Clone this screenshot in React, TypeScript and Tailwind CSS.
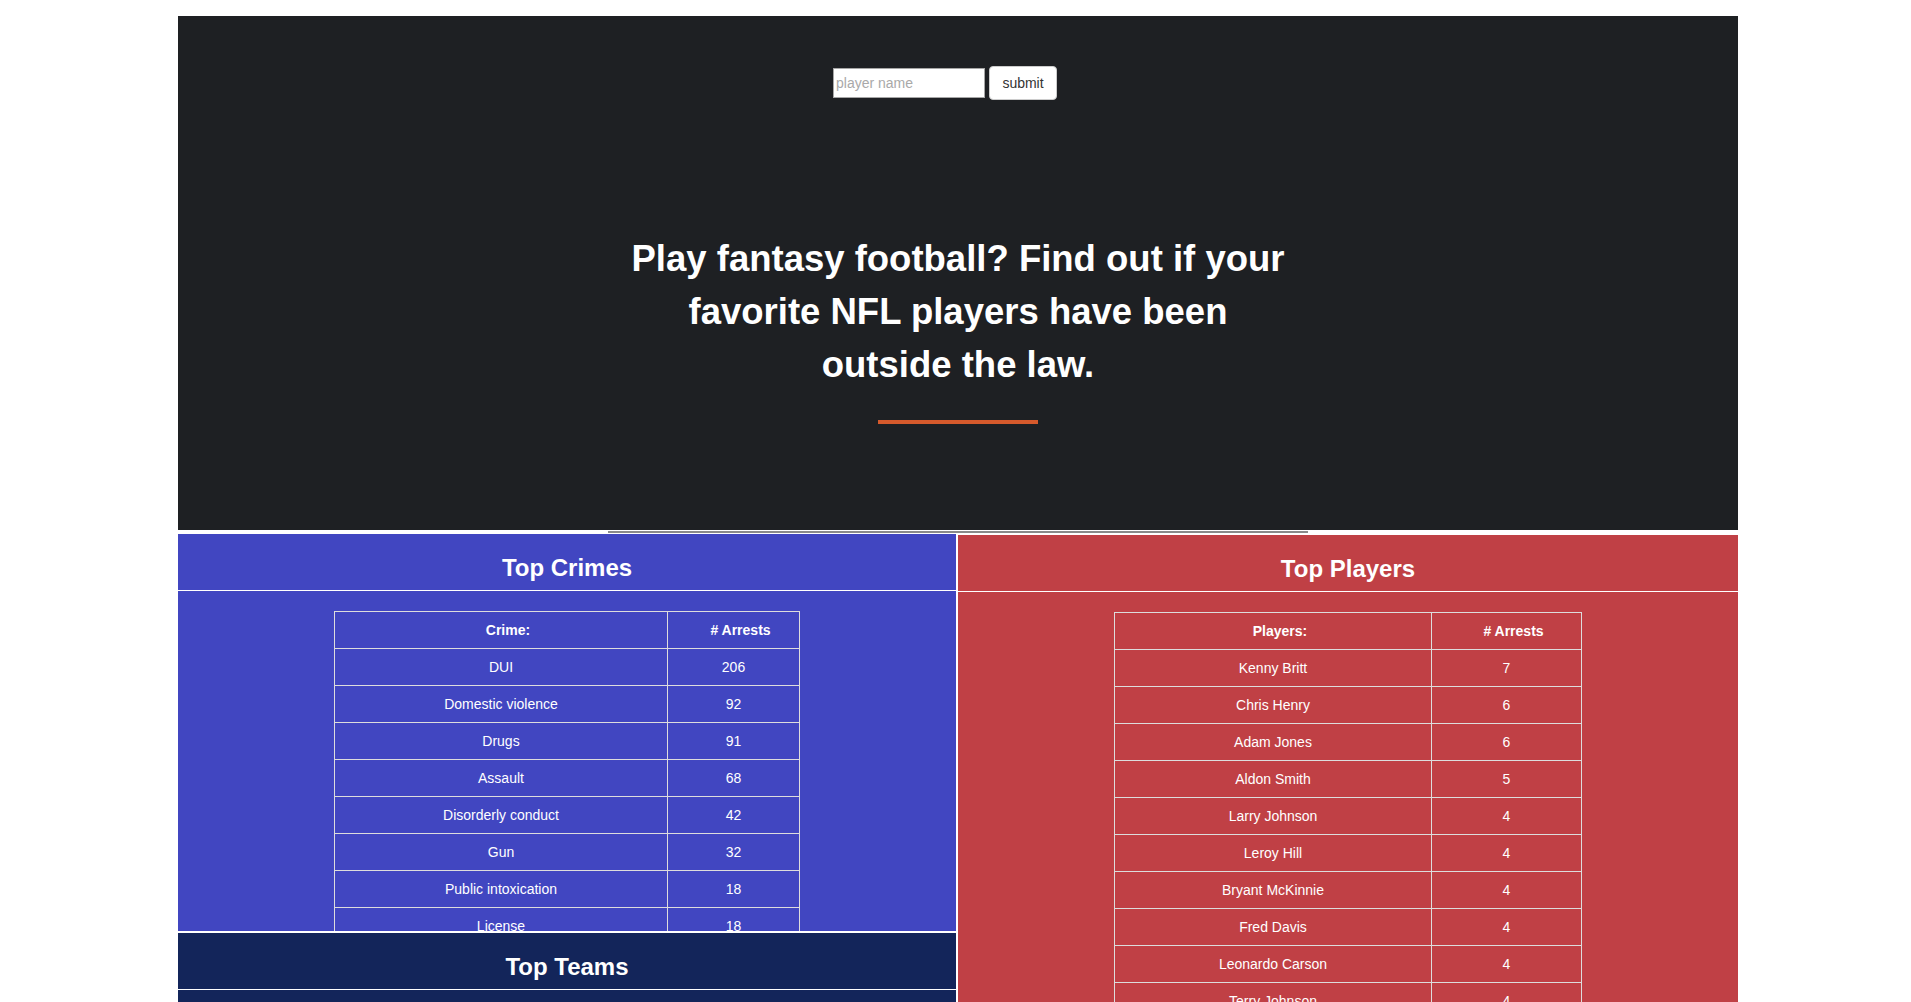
import React from 'react';

const crimes: [string, number][] = [
  ['DUI', 206],
  ['Domestic violence', 92],
  ['Drugs', 91],
  ['Assault', 68],
  ['Disorderly conduct', 42],
  ['Gun', 32],
  ['Public intoxication', 18],
  ['License', 18],
];

const players: [string, number][] = [
  ['Kenny Britt', 7],
  ['Chris Henry', 6],
  ['Adam Jones', 6],
  ['Aldon Smith', 5],
  ['Larry Johnson', 4],
  ['Leroy Hill', 4],
  ['Bryant McKinnie', 4],
  ['Fred Davis', 4],
  ['Leonardo Carson', 4],
  ['Terry Johnson', 4],
];

const cell = 'border border-[#dddddd] py-[8px] leading-[20px] text-center';
const headCell = 'border border-[#dddddd] py-[8px] pl-[15px] pr-[1px] leading-[20px] text-center font-bold';

const StatTable: React.FC<{
  label: string;
  rows: [string, number][];
  widths: [string, string];
}> = ({ label, rows, widths }) => (
  <table className="mx-auto mt-[20px] table-fixed border-collapse text-[14px] text-white">
    <colgroup>
      <col className={widths[0]} />
      <col className={widths[1]} />
    </colgroup>
    <thead>
      <tr>
        <th className={headCell}>{label}</th>
        <th className={headCell}># Arrests</th>
      </tr>
    </thead>
    <tbody>
      {rows.map(([name, n]) => (
        <tr key={name}>
          <td className={cell}>{name}</td>
          <td className={cell}>{n}</td>
        </tr>
      ))}
    </tbody>
  </table>
);

const PanelTitle: React.FC<{ children: React.ReactNode }> = ({ children }) => (
  <h2 className="border-b border-white pt-[21px] pb-[9px] text-center text-[24px] font-bold leading-[1.1] text-white">
    {children}
  </h2>
);

const App: React.FC = () => {
  return (
    <div className="h-screen overflow-hidden bg-white font-['Liberation_Sans',Arial,sans-serif]">
      <div className="ml-[178px] w-[1560px] pt-[16px]">
        {/* Hero */}
        <section className="flex h-[514px] flex-col items-center bg-[#1e2023]">
          <form className="mt-[50px] mr-[26px] flex items-center gap-[4px]">
            <input
              type="text"
              placeholder="player name"
              className="h-[30px] w-[152px] border border-[#a6a6a6] bg-white px-[2px] text-[14px] text-[#333] placeholder:text-[#a9a9a9] outline-none"
            />
            <button
              type="button"
              className="h-[34px] w-[68px] rounded-[4px] border border-[#cccccc] bg-white text-[14px] text-[#333]"
            >
              submit
            </button>
          </form>
          <h1 className="mt-[132px] text-center text-[36.5px] font-bold leading-[53px] text-white">
            Play fantasy football? Find out if your
            <br />
            favorite NFL players have been
            <br />
            outside the law.
          </h1>
          <div className="mt-[29px] h-[4px] w-[160px] bg-[#d65a2c]" />
        </section>

        {/* Divider */}
        <div className="flex h-[4px] items-center justify-center">
          <div className="h-[2px] w-[700px] bg-[#8a8a8a]" />
        </div>

        {/* Stats */}
        <div className="grid grid-cols-[778px_780px] gap-[2px]">
          <div className="flex flex-col gap-[2px]">
            <div className="h-[397px] overflow-hidden bg-[#4146c1]">
              <PanelTitle>Top Crimes</PanelTitle>
              <StatTable label="Crime:" rows={crimes} widths={['w-[333px]', 'w-[132px]']} />
            </div>
            <div className="h-[500px] bg-[#13255a]">
              <PanelTitle>Top Teams</PanelTitle>
            </div>
          </div>
          <div className="mt-[1px] h-[900px] bg-[#c04045]">
            <PanelTitle>Top Players</PanelTitle>
            <StatTable label="Players:" rows={players} widths={['w-[317px]', 'w-[150px]']} />
          </div>
        </div>
      </div>
    </div>
  );
};

export default App;
